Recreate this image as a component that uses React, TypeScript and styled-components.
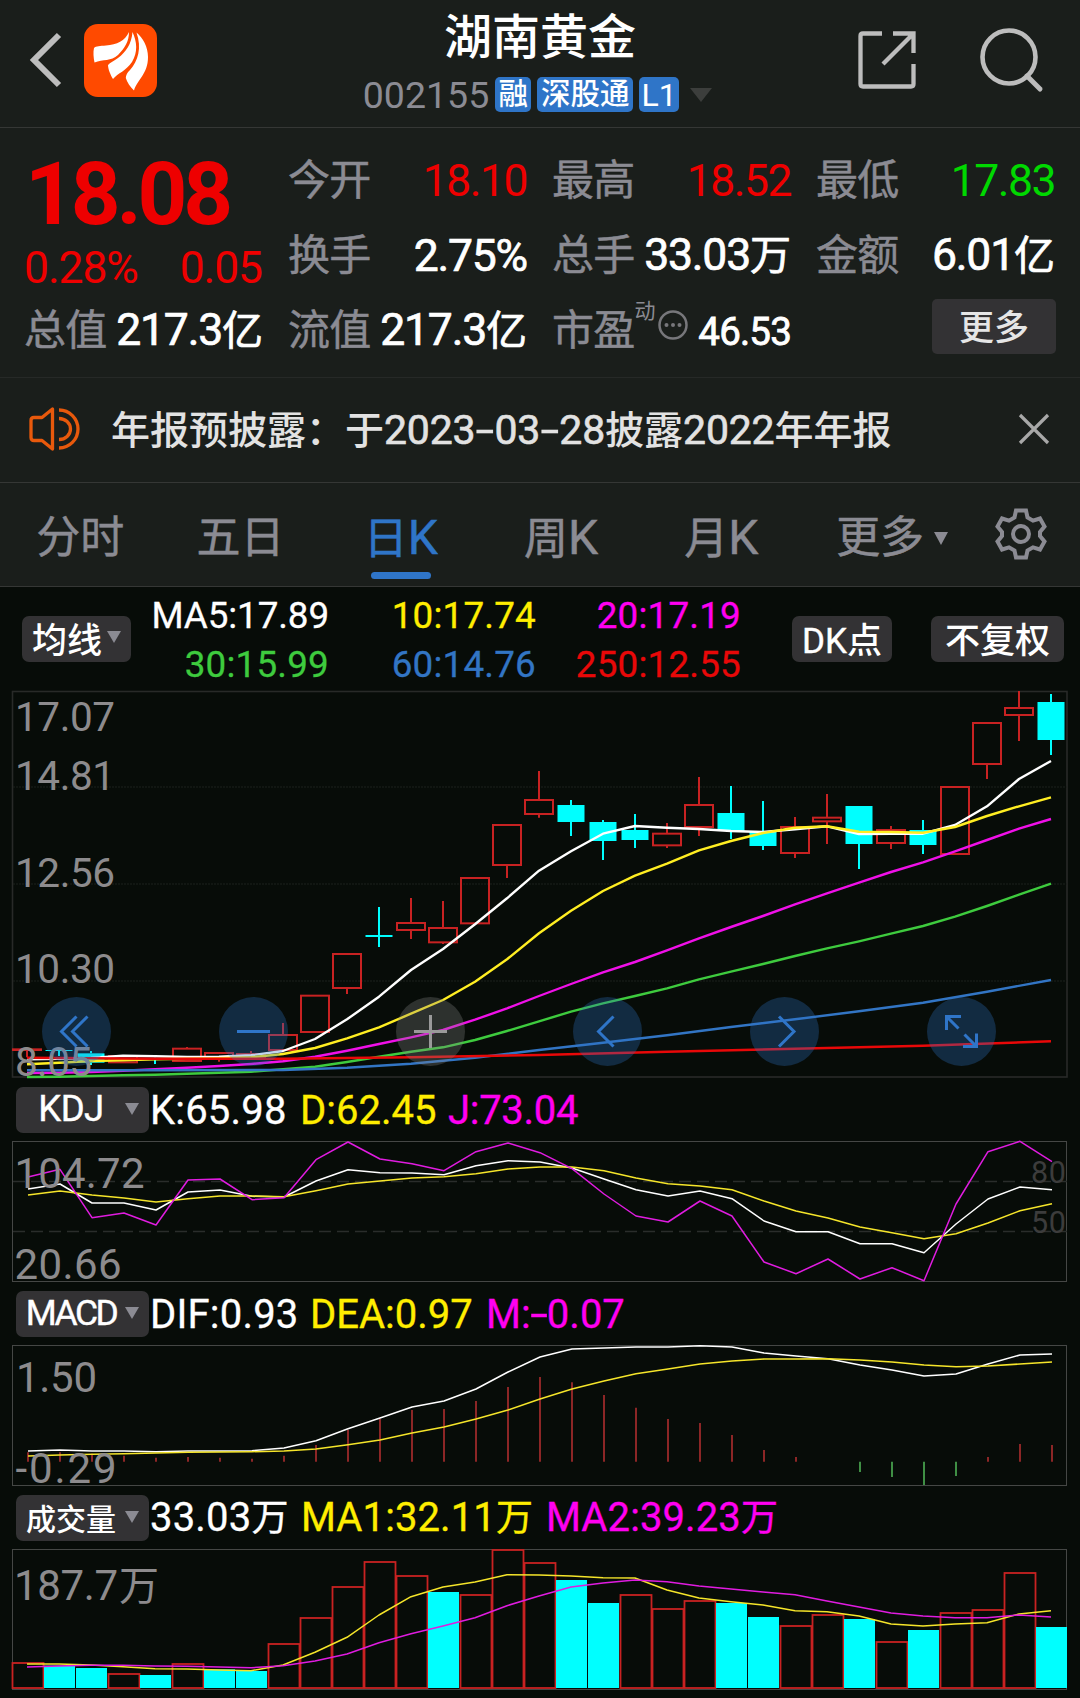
import React from "react";
import styled, { createGlobalStyle } from "styled-components";

const RED = "#ee0000";
const GREEN = "#00d800";
const BLUE = "#2f75c8";
const YELLOW = "#ffee00";
const MAGENTA = "#ff00f0";
const GREY = "#8b8b93";
const CANDLE_RED = "#c82222";
const CYAN = "#00ffff";

const GlobalStyle = createGlobalStyle`
  body { margin: 0; background: #070c08; }
  * { box-sizing: border-box; }
  svg { display: block; overflow: visible; }
`;

const Screen = styled.div`
  width: 1080px;
  height: 1698px;
  overflow: hidden;
  display: flex;
  flex-direction: column;
  background: #070c08;
  color: #fff;
  font-family: Roboto, "Noto Sans CJK SC", sans-serif;
  font-weight: 500;
  white-space: nowrap;
`;

/* ---------- header ---------- */

const Header = styled.header`
  height: 128px;
  display: grid;
  grid-template-columns: 300px 1fr 300px;
  background: #1a1e1b;
  border-bottom: 1px solid #353735;
`;

const HeaderLeft = styled.div`
  display: flex;
  align-items: center;
  gap: 21px;
  padding: 0 0 7px 28px;
`;

const Logo = styled.div`
  width: 73px;
  height: 73px;
  border-radius: 14px;
  background: #ff4a00;
`;

const HeaderCenter = styled.div`
  display: flex;
  flex-direction: column;
  align-items: center;
`;

const Title = styled.h1`
  margin: 9px 0 0;
  font-size: 48px;
  line-height: 58px;
  font-weight: 500;
`;

const SubTitle = styled.div`
  height: 35px;
  margin: 10px 5px 0 0;
  display: flex;
  align-items: center;
`;

const Code = styled.span`
  font-size: 37.5px;
  font-weight: 400;
  color: ${GREY};
  margin-right: 6px;
`;

const Badge = styled.span<{ $w: number; $latin?: boolean }>`
  width: ${(p) => p.$w}px;
  height: 35px;
  border-radius: 5px;
  margin-right: 6px;
  background: ${BLUE};
  font-size: ${(p) => (p.$latin ? 32 : 29.5)}px;
  font-weight: ${(p) => (p.$latin ? 400 : 500)};
  line-height: ${(p) => (p.$latin ? 36 : 34)}px;
  text-align: center;
`;

const HeaderRight = styled.div`
  display: flex;
  justify-content: flex-end;
  align-items: center;
  gap: 61px;
  padding: 0 36px 7px 0;
`;

const Triangle = styled.i<{ $w: number; $h: number; $c?: string }>`
  width: 0;
  height: 0;
  flex: none;
  border-style: solid;
  border-color: ${(p) => p.$c ?? GREY} transparent transparent;
  border-width: ${(p) => p.$h}px ${(p) => p.$w / 2}px 0;
`;

/* ---------- quote ---------- */

const Quote = styled.section`
  height: 250px;
  padding: 15px 24px 0;
  display: grid;
  grid-template-columns: repeat(4, 238px);
  grid-template-rows: repeat(3, 75px);
  column-gap: 26px;
  background: #1a1e1b;
  border-bottom: 1px solid #262927;
`;

const PriceBlock = styled.div`
  grid-row: span 2;
  display: flex;
  flex-direction: column;
  color: ${RED};
`;

const Price = styled.div`
  font-size: 87px;
  line-height: 98px;
  font-weight: 700;
  letter-spacing: -4.2px;
  padding: 2px 0 0 1px;
`;

const Change = styled.div`
  display: flex;
  justify-content: space-between;
  font-size: 44.5px;
  line-height: 50px;
  font-weight: 400;
  letter-spacing: -1.1px;
`;

const Cell = styled.div`
  display: flex;
  align-items: center;
  justify-content: space-between;
`;

const Label = styled.span`
  font-size: 42px;
  line-height: 60px;
  font-weight: 400;
  letter-spacing: -0.7px;
  -webkit-text-stroke: 0.5px currentColor;
  color: ${GREY};
`;

const Value = styled.span<{ $c?: string; $light?: boolean }>`
  margin-right: -1px;
  font-size: 44.5px;
  line-height: 60px;
  font-weight: 400;
  -webkit-text-stroke: ${(p) => (p.$light ? 0 : 0.7)}px currentColor;
  letter-spacing: ${(p) => (p.$light ? -1.5 : -1.2)}px;
  color: ${(p) => p.$c ?? "#fff"};
`;

const Unit = styled.span<{ $s?: number }>`
  font-size: ${(p) => p.$s ?? 41}px;
  letter-spacing: 0;
`;

const Sup = styled.span`
  align-self: flex-start;
  margin: 3px 2px 0 0;
  font-size: 21px;
  line-height: 30px;
  font-weight: 400;
  color: ${GREY};
`;

const SmallValue = styled.span`
  font-size: 38.5px;
  font-weight: 400;
  -webkit-text-stroke: 0.8px currentColor;
  margin: 0 -1px 0 auto;
  padding-top: 1px;
  letter-spacing: -0.8px;
`;

const MoreButton = styled.button`
  justify-self: end;
  align-self: center;
  width: 124px;
  height: 55px;
  margin: -8px -2px 0 0;
  padding: 0 0 4px;
  border: 0;
  border-radius: 5px;
  background: #333234;
  color: #e6e6e6;
  font: 500 35px/50px "Noto Sans CJK SC", sans-serif;
`;

/* ---------- notice ---------- */

const Notice = styled.section`
  height: 105px;
  display: flex;
  align-items: center;
  padding: 0 31px 2px 28px;
  background: #1a1e1b;
  border-bottom: 1px solid #353735;
`;

const NoticeText = styled.p`
  flex: 1;
  margin: 3px 0 0 31px;
  font-size: 39px;
  line-height: 60px;
  color: #e2e2e2;
`;

const Digits = styled.span`
  font-size: 41px;
  font-weight: 400;
  -webkit-text-stroke: 0.6px currentColor;
  letter-spacing: -0.2px;
`;

const Dash = styled.span<{ $pad?: number }>`
  display: inline-block;
  transform: scaleX(1.6);
  padding: 0 ${(p) => p.$pad ?? 4}px;
`;

/* ---------- tabs ---------- */

const Tabs = styled.nav`
  height: 104px;
  display: flex;
  background: #1a1e1b;
  border-bottom: 1px solid #353735;
`;

const Tab = styled.div<{ $active?: boolean; $shift?: number }>`
  width: 160.3px;
  padding-left: ${(p) => p.$shift ?? 0}px;
  display: flex;
  flex-direction: column;
  align-items: center;
  font-size: 44px;
  line-height: 60px;
  padding-top: 25px;
  font-weight: 400;
  -webkit-text-stroke: 0.5px currentColor;
  color: ${(p) => (p.$active ? BLUE : GREY)};
`;

const TabLabel = styled.span`
  display: flex;
  align-items: center;
  gap: 10px;
`;

const K = styled.span`
  font-size: 48px;
`;

const Underline = styled.i`
  width: 60px;
  height: 7px;
  margin-top: 3px;
  border-radius: 4px;
  background: ${BLUE};
`;

const Settings = styled.div`
  padding: 25px 0 0 33px;
`;

/* ---------- moving averages ---------- */

const MaBar = styled.section`
  height: 104px;
  display: flex;
  align-items: center;
  padding: 0 16px 0 22px;
`;

const Chip = styled.button<{ $w: number; $size?: number; $ls?: number }>`
  width: ${(p) => p.$w}px;
  height: 46px;
  flex: none;
  padding: 0 0 4px;
  border: 0;
  border-radius: 7px;
  background: #333234;
  color: #fff;
  display: flex;
  align-items: center;
  justify-content: center;
  gap: 5px;
  font-family: inherit;
  font-weight: 500;
  font-size: ${(p) => p.$size ?? 35}px;
  letter-spacing: ${(p) => p.$ls ?? 0}px;
`;

const Latin = styled.span`
  font-weight: 400;
  -webkit-text-stroke: 0.4px currentColor;
`;

const MaGrid = styled.div`
  display: grid;
  grid-template-columns: 198px 207px 205px;
  grid-auto-rows: 49px;
  margin: 0 auto 0 0;
  padding-top: 1px;
  justify-items: end;
  align-items: center;
`;

const MaItem = styled.span<{ $c: string; $ls?: number }>`
  font-size: 36.8px;
  font-weight: 400;
  letter-spacing: ${(p) => p.$ls ?? 0.2}px;
  -webkit-text-stroke: 0.3px currentColor;
  color: ${(p) => p.$c};
`;

/* ---------- charts ---------- */

const PricePanel = styled.section`
  position: relative;
  height: 387px;
`;

const Controls = styled.div`
  position: absolute;
  left: 42px;
  top: 306px;
  display: flex;
  gap: 108px;
`;

const RoundButton = styled.button<{ $muted?: boolean }>`
  width: 69px;
  height: 69px;
  padding: 0;
  border: 0;
  border-radius: 50%;
  background: ${(p) => (p.$muted ? "rgba(135,135,135,.3)" : "rgba(47,117,200,.3)")};
  color: ${(p) => (p.$muted ? "#9a9a9a" : BLUE)};
`;

const IndicatorBar = styled.div`
  height: 63px;
  display: flex;
  align-items: center;
  padding: 0 0 0 16px;
`;

const IndicatorChip = styled(Chip)`
  justify-content: space-between;
  padding: 0 10px 2px 6px;
`;

const ChipText = styled.span`
  flex: 1;
  text-align: center;
`;

const Reading = styled.span<{ $c?: string; $w: number; $ls?: number }>`
  width: ${(p) => p.$w}px;
  flex: none;
  padding: 2px 0 0 1px;
  font-size: 40px;
  line-height: 46px;
  font-weight: 400;
  letter-spacing: ${(p) => p.$ls ?? 0}px;
  -webkit-text-stroke: 0.3px currentColor;
  color: ${(p) => p.$c ?? "#fff"};
`;

/* Chart values are stored in thirds of a pixel, measured from each panel's own base. */
const STEP = 32;
type Pt = number | null;

const toY = (v: number, base: number) => (v - base) / 3;

const linePoints = (ys: Pt[], base: number, x0: number) =>
  ys
    .map((v, i) => (v === null ? "" : `${x0 + i * STEP},${toY(v, base).toFixed(1)}`))
    .filter(Boolean)
    .join(" ");

interface LineProps { ys: Pt[]; base: number; x0?: number; color: string; w?: number }
const Line = ({ ys, base, x0 = 28, color, w = 1.5 }: LineProps) => (
  <polyline points={linePoints(ys, base, x0)} fill="none" stroke={color} strokeWidth={w} strokeLinejoin="round" />
);

interface AxisProps { x: number; y: number; len: number; size?: number; color?: string; children: string }
const AxisText = ({ x, y, len, size = 42, color = "#8d8b8d", children }: AxisProps) => (
  <text x={x} y={y} textLength={len} fontSize={size} fontWeight={400} fill={color}>{children}</text>
);

/* high, body top, body bottom, low, direction */
type Candle = [number, number, number, number, "u" | "d"];
const candles: Candle[] = [
  [1108, 1108, 1110, 1132, "u"], [1111, 1110, 1113, 1128, "d"], [1113, 1120, 1148, 1155, "d"],
  [1127, 1128, 1147, 1147, "u"], [1133, 1134, 1138, 1152, "d"], [1101, 1106, 1143, 1143, "u"],
  [1119, 1119, 1134, 1145, "u"], [1113, 1122, 1134, 1134, "u"], [1029, 1065, 1110, 1110, "u"],
  [947, 947, 1056, 1056, "u"], [822, 822, 924, 942, "u"], [681, 765, 771, 801, "d"],
  [654, 729, 750, 777, "u"], [663, 744, 787, 792, "u"], [594, 594, 730, 730, "u"],
  [435, 435, 555, 594, "u"], [273, 360, 402, 413, "u"], [360, 375, 426, 468, "d"],
  [420, 426, 483, 540, "d"], [402, 450, 480, 504, "d"], [429, 461, 496, 504, "u"],
  [291, 375, 441, 468, "u"], [318, 399, 453, 477, "d"], [363, 456, 498, 510, "d"],
  [411, 441, 519, 534, "u"], [342, 413, 424, 492, "u"], [378, 378, 492, 567, "d"],
  [438, 450, 489, 507, "u"], [420, 450, 495, 522, "d"], [321, 321, 522, 522, "u"],
  [129, 129, 252, 297, "u"], [33, 84, 105, 183, "u"], [42, 66, 180, 225, "d"],
];

const ma5 = [1138, 1136, 1134, 1127, 1129, 1131, 1130, 1126, 1113, 1077, 1018, 950, 870, 807, 733, 655, 572, 514, 461, 438, 443, 447, 453, 456, 448, 439, 462, 461, 461, 435, 379, 297, 243];
const ma10 = [1153, 1148, 1143, 1141, 1138, 1136, 1135, 1132, 1122, 1104, 1075, 1042, 1001, 960, 905, 838, 760, 692, 633, 587, 551, 511, 483, 459, 443, 439, 455, 456, 458, 441, 408, 379, 352];
const ma20 = [1179, 1178, 1176, 1172, 1168, 1163, 1158, 1152, 1144, 1130, 1112, 1092, 1072, 1050, 1019, 985, 948, 912, 877, 846, 811, 775, 741, 708, 673, 640, 608, 576, 547, 514, 480, 446, 417];
const ma30 = [1191, 1190, 1188, 1186, 1184, 1181, 1178, 1175, 1168, 1160, 1146, 1130, 1115, 1102, 1080, 1053, 1024, 995, 970, 948, 925, 898, 875, 852, 828, 805, 784, 761, 738, 710, 678, 644, 611];
const ma60: Pt[] = [1171, null, null, null, 1171, null, null, null, 1170, null, 1163, null, 1151, null, 1133, null, 1110, null, 1088, null, 1066, null, 1041, null, 1018, null, 994, null, 968, null, 935, null, 900];
const ma250: Pt[] = [1133, null, null, null, 1136, null, null, null, 1136, null, null, null, 1132, null, null, null, 1125, null, null, null, 1115, null, null, null, 1106, null, null, null, 1097, null, null, null, 1084];

const kdjK = [327, 312, 369, 369, 390, 336, 330, 349, 351, 303, 269, 278, 279, 284, 257, 242, 246, 264, 297, 329, 348, 333, 356, 423, 455, 455, 491, 491, 518, 432, 357, 321, 329];
const kdjD = [345, 333, 345, 354, 366, 356, 348, 348, 350, 332, 312, 303, 294, 290, 281, 267, 261, 261, 272, 294, 311, 318, 329, 363, 393, 414, 441, 458, 476, 461, 429, 392, 371];
const kdjJ = [291, 268, 413, 399, 435, 300, 297, 359, 353, 239, 186, 237, 251, 272, 215, 189, 218, 266, 342, 408, 426, 363, 408, 546, 581, 537, 597, 563, 602, 372, 215, 184, 245];

const macdDif = [1113, 1110, 1113, 1113, 1115, 1113, 1113, 1112, 1104, 1082, 1046, 1014, 981, 963, 927, 876, 831, 807, 804, 801, 801, 797, 801, 819, 828, 836, 855, 870, 888, 882, 852, 825, 822];
const macdDea = [1128, 1125, 1123, 1121, 1119, 1117, 1116, 1115, 1113, 1107, 1094, 1080, 1059, 1041, 1017, 990, 957, 927, 903, 881, 867, 852, 843, 837, 837, 836, 840, 846, 855, 860, 858, 852, 846];
const macdBars = [1117, 1117, 1121, 1127, 1133, 1131, 1133, 1136, 1127, 1095, 1049, 1017, 990, 987, 963, 921, 891, 907, 945, 983, 1017, 1029, 1065, 1110, 1131, 1145, 1176, 1191, 1215, 1188, 1131, 1092, 1095];

const volumes: [number, "u" | "d"][] = [
  [819, "u"], [827, "d"], [834, "d"], [852, "u"], [855, "d"], [822, "u"], [838, "d"], [843, "d"], [762, "u"],
  [684, "u"], [591, "u"], [516, "u"], [558, "u"], [606, "d"], [615, "u"], [480, "u"], [519, "u"], [570, "d"],
  [639, "d"], [615, "u"], [657, "u"], [633, "u"], [639, "d"], [681, "d"], [708, "u"], [675, "u"], [687, "d"],
  [756, "u"], [720, "d"], [669, "u"], [660, "u"], [549, "u"], [711, "d"],
];
const volMa1 = [822, 822, 825, 830, 836, 837, 840, 842, 825, 787, 742, 675, 620, 591, 576, 554, 555, 558, 563, 564, 600, 624, 635, 645, 662, 665, 678, 702, 708, 702, 698, 672, 662];
const volMa2 = [831, 828, 826, 826, 828, 829, 831, 833, 827, 813, 792, 758, 731, 708, 683, 647, 618, 591, 579, 570, 575, 588, 597, 606, 614, 633, 651, 669, 678, 683, 683, 675, 681];

const PriceChart = () => {
  const base = 33;
  return (
    <svg width="1080" height="387" viewBox="0 0 1080 387">
      <rect x="12.5" y="0.5" width="1054.5" height="385.5" fill="none" stroke="#282a28" strokeWidth="1.6" />
      {[96, 193, 290].map((y) => (
        <line key={y} x1="13" x2="1067" y1={y} y2={y} stroke="#1c201d" strokeDasharray="2 1" />
      ))}
      {candles.map(([h, t, b, l, dir], i) => {
        const x = 27 + i * STEP;
        const top = toY(t, base);
        const bottom = toY(b, base);
        const color = dir === "u" ? CANDLE_RED : CYAN;
        return (
          <g key={i} stroke={color} strokeWidth="2">
            <line x1={x} x2={x} y1={toY(h, base)} y2={top} />
            <line x1={x} x2={x} y1={bottom} y2={toY(l, base)} />
            {dir === "u" ? (
              <rect x={x - 14} y={top} width="28" height={bottom - top} fill="none" />
            ) : (
              <rect x={x - 13.5} y={top} width="27" height={bottom - top} fill={color} stroke="none" />
            )}
          </g>
        );
      })}
      <Line ys={ma5} base={base} x0={27} color="#fff" w={2.4} />
      <Line ys={ma10} base={base} x0={27} color="#ffee22" w={2.4} />
      <Line ys={ma20} base={base} x0={27} color="#f010e8" w={2.4} />
      <Line ys={ma30} base={base} x0={27} color="#3ecb3e" w={2.4} />
      <Line ys={ma60} base={base} x0={27} color="#3275c4" w={2.4} />
      <Line ys={ma250} base={base} x0={27} color="#e80808" w={2.6} />
      <AxisText x={15} y={39.5} len={100} size={40.5}>17.07</AxisText>
      <AxisText x={15} y={98.5} len={100} size={40.5}>14.81</AxisText>
      <AxisText x={15} y={195.5} len={100} size={40.5}>12.56</AxisText>
      <AxisText x={15} y={291.5} len={100} size={40.5}>10.30</AxisText>
      <AxisText x={15} y={384.5} len={77} size={40.5}>8.05</AxisText>
    </svg>
  );
};

const SubChart = ({ children }: { children: React.ReactNode }) => (
  <svg width="1080" height="141" viewBox="0 0 1080 141">
    <rect x="12.5" y="0.5" width="1054" height="140" fill="none" stroke="#454745" />
    {children}
  </svg>
);

const KdjChart = () => (
  <SubChart>
    {[40.5, 90.5].map((y) => (
      <line key={y} x1="13" x2="1067" y1={y} y2={y} stroke="#2a2d2b" strokeWidth="1.5" strokeDasharray="12 6" />
    ))}
    <AxisText x={1031} y={42} len={35} size={30.5} color="#3c3c3c">80</AxisText>
    <AxisText x={1031} y={92} len={35} size={30.5} color="#3c3c3c">50</AxisText>
    <Line ys={kdjK} base={183} color="#fff" />
    <Line ys={kdjD} base={183} color="#f5e52a" />
    <Line ys={kdjJ} base={183} color="#e01ce0" />
    <AxisText x={14.5} y={46.5} len={130}>104.72</AxisText>
    <AxisText x={14.5} y={137.5} len={107}>20.66</AxisText>
  </SubChart>
);

const MacdChart = () => {
  const base = 795;
  const zero = toY(1145, base);
  return (
    <SubChart>
      {macdBars.map((v, i) => (
        <line key={i} x1={28 + i * STEP} x2={28 + i * STEP} y1={zero} y2={toY(v, base)}
          stroke={v <= 1145 ? "#8c2626" : "#3f8f44"} strokeWidth="2" />
      ))}
      <Line ys={macdDif} base={base} color="#fff" />
      <Line ys={macdDea} base={base} color="#f5e52a" />
      <AxisText x={16} y={46.5} len={81}>1.50</AxisText>
      <AxisText x={15.5} y={137.5} len={101}>-0.29</AxisText>
    </SubChart>
  );
};

const VolumeChart = () => {
  const base = 477;
  const floor = toY(894, base);
  return (
    <SubChart>
      {volumes.map(([v, dir], i) => {
        const x = 12 + i * STEP;
        const y = toY(v, base);
        return dir === "u" ? (
          <rect key={i} x={x + 0.5} y={y} width="31" height={floor - y} fill="none" stroke={CANDLE_RED} strokeWidth="1.8" />
        ) : (
          <rect key={i} x={x} y={y} width="31" height={floor - y} fill={CYAN} />
        );
      })}
      <Line ys={volMa1} base={base} x0={27} color="#f5e52a" />
      <Line ys={volMa2} base={base} x0={27} color="#e01ce0" />
      <AxisText x={14} y={51} len={104}>187.7</AxisText>
      <AxisText x={119} y={50.5} len={40} size={40}>万</AxisText>
    </SubChart>
  );
};

const controlIcons = [
  "M0,-15 L-15,0 L0,15 M11,-15 L-4,0 L11,15",
  "M-16.5,0 H16.5",
  "M-16.5,0 H16.5 M0,-16.5 V16.5",
  "M6,-15 L-9,0 L6,15",
  "M-5.5,-15 L9.5,0 L-5.5,15",
  "M-15,-1.5 V-15 H-0.5 M-15,-15 L-3,-3 M15,2 V15 H1.5 M15,15 L3,3",
];

export default function App() {
  return (
    <>
      <GlobalStyle />
      <Screen>
        <Header>
          <HeaderLeft>
            <svg width="35" height="60" viewBox="0 0 35 60" fill="none" stroke="#bdbdbd" strokeWidth="6">
              <path d="M31 5 L6 30 L31 55" />
            </svg>
            <Logo>
              <svg width="73" height="73" viewBox="0 0 73 73" fill="#fff">
                <path d="M45 8 C41 17 33 20.5 22 21.5 C16 22 12 22 10 24 C9 28 9.5 34 10.5 38.5 C19 35 27 37.5 34 31 C41 24 45 17 45 8Z" />
                <path d="M48.5 8 C47.5 20 42 28 34 34 C30 37 26 38.5 24 41 C24 45 26.5 51 29 55 C34 49 42 47 48 38 C54 28 53 18 48.5 8Z" />
                <path d="M52.5 8.5 C58 24 54 37 46 46 C43 49 42 51 41.8 54 C43 58.5 46.5 63 50 66.5 C53 56 64 50 64 33 C64 23 59 14 52.5 8.5Z" />
              </svg>
            </Logo>
          </HeaderLeft>
          <HeaderCenter>
            <Title>湖南黄金</Title>
            <SubTitle>
              <Code>002155</Code>
              <Badge $w={36}>融</Badge>
              <Badge $w={96}>深股通</Badge>
              <Badge $w={40} $latin>L1</Badge>
              <Triangle $w={22} $h={14} $c="#3c3e3c" style={{ marginLeft: 5 }} />
            </SubTitle>
          </HeaderCenter>
          <HeaderRight>
            <svg width="60" height="60" viewBox="0 0 60 60" fill="none" stroke="#bdbdbd" strokeWidth="4.3">
              <path d="M25 3.5 H6 Q3.5 3.5 3.5 6 V54 Q3.5 56.5 6 56.5 H54 Q56.5 56.5 56.5 54 V34" />
              <path d="M36 3.5 H56.5 V23 M56 4 L26 34" />
            </svg>
            <svg width="66" height="66" viewBox="0 0 66 66" fill="none" stroke="#bdbdbd" strokeWidth="4.6">
              <circle cx="31" cy="30" r="26.5" />
              <path d="M49 49 L62 62" strokeWidth="5" strokeLinecap="round" />
            </svg>
          </HeaderRight>
        </Header>

        <Quote>
          <PriceBlock>
            <Price>18.08</Price>
            <Change><span>0.28%</span><span>0.05</span></Change>
          </PriceBlock>
          <Cell><Label>今开</Label><Value $c={RED} $light>18.10</Value></Cell>
          <Cell><Label>最高</Label><Value $c={RED} $light>18.52</Value></Cell>
          <Cell><Label>最低</Label><Value $c={GREEN} $light>17.83</Value></Cell>
          <Cell><Label>换手</Label><Value>2.75%</Value></Cell>
          <Cell><Label>总手</Label><Value>33.03<Unit>万</Unit></Value></Cell>
          <Cell><Label>金额</Label><Value>6.01<Unit>亿</Unit></Value></Cell>
          <Cell><Label>总值</Label><Value>217.3<Unit>亿</Unit></Value></Cell>
          <Cell><Label>流值</Label><Value>217.3<Unit>亿</Unit></Value></Cell>
          <Cell>
            <Label>市盈</Label>
            <Sup>动</Sup>
            <svg width="30" height="41" viewBox="0 0 30 41" fill="#77777b">
              <circle cx="15" cy="15" r="13.5" fill="none" stroke="#77777b" strokeWidth="2.5" />
              <circle cx="8.5" cy="15" r="2" /><circle cx="15" cy="15" r="2" /><circle cx="21.5" cy="15" r="2" />
            </svg>
            <SmallValue>46.53</SmallValue>
          </Cell>
          <MoreButton>更多</MoreButton>
        </Quote>

        <Notice>
          <svg width="52" height="46" viewBox="0 0 52 46" fill="none" stroke="#e8590c" strokeWidth="3.3">
            <path d="M24.5 3 V43 L14 34.5 H6 Q3 34.5 3 31.5 V14.5 Q3 11.5 6 11.5 H14 Z" strokeLinejoin="round" />
            <path d="M31 12.5 A11.5 10.5 0 0 1 31 33.5 M31 4 A19 19 0 0 1 31 42" />
          </svg>
          <NoticeText>
            年报预披露：于<Digits>2023<Dash>-</Dash>03<Dash>-</Dash>28</Digits>披露<Digits>2022</Digits>年年报
          </NoticeText>
          <svg width="30" height="30" viewBox="0 0 30 30" stroke="#a8a8a8" strokeWidth="3.2">
            <path d="M1 1 L29 29 M29 1 L1 29" />
          </svg>
        </Notice>

        <Tabs>
          <Tab>分时</Tab>
          <Tab>五日</Tab>
          <Tab $active><TabLabel><span>日<K>K</K></span></TabLabel><Underline /></Tab>
          <Tab><span>周<K>K</K></span></Tab>
          <Tab><span>月<K>K</K></span></Tab>
          <Tab $shift={21}><TabLabel>更多<Triangle $w={15} $h={13} /></TabLabel></Tab>
          <Settings>
            <svg width="52" height="52" viewBox="0 0 52 52" fill="none" stroke={GREY} strokeWidth="4">
              <path d="M21 2.5 H31 L32.5 9.5 L38 12.7 L45 10.5 L49.5 18.5 L45 24 V28 L49.5 33.5 L45 41.5 L38 39.3 L32.5 42.5 L31 49.5 H21 L19.5 42.5 L14 39.3 L7 41.5 L2.5 33.5 L7 28 V24 L2.5 18.5 L7 10.5 L14 12.7 L19.5 9.5 Z" />
              <circle cx="26" cy="26" r="8" />
            </svg>
          </Settings>
        </Tabs>

        <MaBar>
          <Chip $w={109}>均线<Triangle $w={14} $h={12} /></Chip>
          <MaGrid>
            <MaItem $c="#fff" $ls={-0.1}>MA5:17.89</MaItem>
            <MaItem $c={YELLOW}>10:17.74</MaItem>
            <MaItem $c={MAGENTA}>20:17.19</MaItem>
            <MaItem $c="#3ecb3e">30:15.99</MaItem>
            <MaItem $c="#3275c4">60:14.76</MaItem>
            <MaItem $c="#e80808">250:12.55</MaItem>
          </MaGrid>
          <Chip $w={100}><span><Latin>DK</Latin>点</span></Chip>
          <Chip $w={133} style={{ marginLeft: 39 }}>不复权</Chip>
        </MaBar>

        <PricePanel>
          <PriceChart />
          <Controls>
            {controlIcons.map((d, i) => (
              <RoundButton key={i} $muted={i === 2}>
                <svg width="69" height="69" viewBox="-34.5 -34.5 69 69" fill="none" stroke="currentColor" strokeWidth="3">
                  <path d={d} />
                </svg>
              </RoundButton>
            ))}
          </Controls>
        </PricePanel>

        <IndicatorBar>
          <IndicatorChip $w={133} $size={36.5} $ls={-0.5}><ChipText><Latin>KDJ</Latin></ChipText><Triangle $w={15} $h={12} /></IndicatorChip>
          <Reading $w={150} $ls={0.2}>K:65.98</Reading>
          <Reading $w={148} $c={YELLOW}>D:62.45</Reading>
          <Reading $w={150} $ls={-0.3} $c={MAGENTA}>J:73.04</Reading>
        </IndicatorBar>
        <KdjChart />

        <IndicatorBar>
          <IndicatorChip $w={133} $size={35.5} $ls={-2.6}><ChipText><Latin>MACD</Latin></ChipText><Triangle $w={15} $h={12} /></IndicatorChip>
          <Reading $w={160} $ls={0.2}>DIF:0.93</Reading>
          <Reading $w={176} $c={YELLOW}>DEA:0.97</Reading>
          <Reading $w={150} $c={MAGENTA}>M:<Dash $pad={2.6}>-</Dash>0.07</Reading>
        </IndicatorBar>
        <MacdChart />

        <IndicatorBar>
          <IndicatorChip $w={133} $size={30}><ChipText>成交量</ChipText><Triangle $w={15} $h={12} /></IndicatorChip>
          <Reading $w={151} $ls={0.2}>33.03<Unit $s={37}>万</Unit></Reading>
          <Reading $w={245} $ls={0.1} $c={YELLOW}>MA1:32.11<Unit $s={37}>万</Unit></Reading>
          <Reading $w={245} $ls={0.1} $c={MAGENTA}>MA2:39.23<Unit $s={37}>万</Unit></Reading>
        </IndicatorBar>
        <VolumeChart />
      </Screen>
    </>
  );
}
